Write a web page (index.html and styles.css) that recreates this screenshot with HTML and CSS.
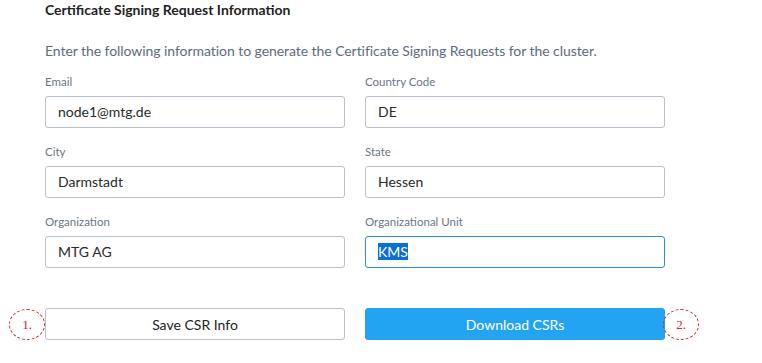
FILE: index.html
```html
<!DOCTYPE html>
<html lang="en">
<head>
    <meta charset="UTF-8">
    <title>Certificate Signing Request Information</title>
    <link rel="stylesheet" href="styles.css">
</head>
<body>
    <div class="panel">
        <h3 class="title">Certificate Signing Request Information</h3>
        <p class="intro">Enter the following information to generate the Certificate Signing Requests for the cluster.</p>

        <div class="form">
            <div class="field">
                <label>Email</label>
                <div class="input">node1@mtg.de</div>
            </div>
            <div class="field">
                <label>Country Code</label>
                <div class="input">DE</div>
            </div>
            <div class="field">
                <label>City</label>
                <div class="input">Darmstadt</div>
            </div>
            <div class="field">
                <label>State</label>
                <div class="input">Hessen</div>
            </div>
            <div class="field">
                <label>Organization</label>
                <div class="input">MTG AG</div>
            </div>
            <div class="field">
                <label>Organizational Unit</label>
                <div class="input focused"><span class="selected">KMS</span></div>
            </div>
        </div>

        <div class="actions">
            <div class="btn-wrap">
                <span class="mark mark-left">1.</span>
                <button class="btn">Save CSR Info</button>
            </div>
            <div class="btn-wrap">
                <button class="btn btn-primary">Download CSRs</button>
                <span class="mark mark-right">2.</span>
            </div>
        </div>
    </div>
</body>
</html>
```

FILE: styles.css
```css
body {
    margin: 0;
    background: #ffffff;
    font-family: Lato, "Open Sans", sans-serif;
    color: #222;
}
.panel {
    width: 620px;
    padding: 1px 0 0 45px;
}
.title {
    margin: 0;
    font-size: 14px;
    font-weight: 700;
    line-height: 17px;
    color: #222;
}
.intro {
    margin: 24px 0 0;
    font-size: 14px;
    line-height: 18px;
    letter-spacing: -0.06px;
    color: #5c6b7f;
}
.form {
    display: grid;
    grid-template-columns: 300px 300px;
    column-gap: 20px;
    row-gap: 17px;
    margin-top: 15px;
}
.field label {
    display: block;
    font-size: 11.5px;
    line-height: 14px;
    color: #6b7686;
    margin-bottom: 7px;
}
.input {
    box-sizing: border-box;
    height: 32px;
    border: 1px solid #b9c0cc;
    border-radius: 3px;
    padding: 0 12px;
    font-size: 14px;
    line-height: 30px;
    color: #2a2a2a;
}
.input.focused {
    border-color: #2b8fe0;
}
.selected {
    background: #0a6fd6;
    color: #ffffff;
}
.actions {
    display: grid;
    grid-template-columns: 300px 300px;
    column-gap: 20px;
    margin-top: 40px;
}
.btn-wrap {
    position: relative;
}
.btn {
    box-sizing: border-box;
    width: 300px;
    height: 32px;
    border: 1px solid #b9c0cc;
    border-radius: 3px;
    background: #ffffff;
    font-family: inherit;
    font-size: 14px;
    color: #222;
}
.btn-primary {
    border-color: #22a4f2;
    background: #22a4f2;
    color: #ffffff;
}
.mark {
    position: absolute;
    top: 1px;
    width: 34px;
    height: 29px;
    border: 1px dashed #d8262b;
    border-radius: 50%;
    font-family: "Liberation Serif", serif;
    font-size: 13px;
    line-height: 29px;
    text-align: center;
    color: #d8262b;
}
.mark-left {
    left: -36px;
}
.mark-right {
    left: 298px;
}
```
